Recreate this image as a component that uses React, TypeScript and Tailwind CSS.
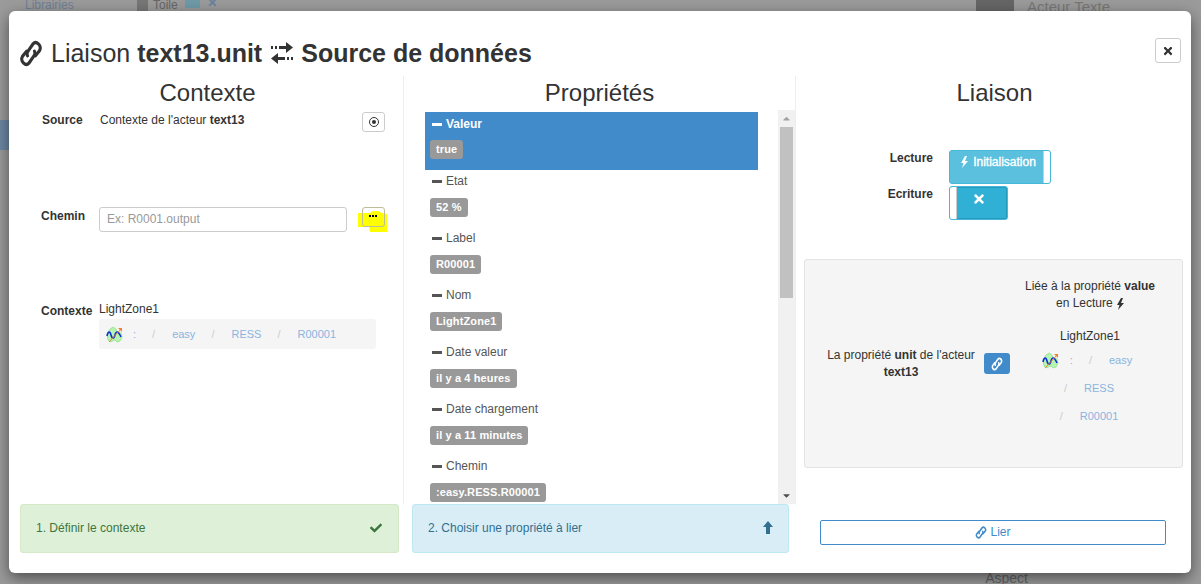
import { FaTimes, FaCheck, FaCaretUp, FaCaretDown } from "react-icons/fa";

const properties = [
  { name: "Valeur", value: "true", active: true },
  { name: "Etat", value: "52 %" },
  { name: "Label", value: "R00001" },
  { name: "Nom", value: "LightZone1" },
  { name: "Date valeur", value: "il y a 4 heures" },
  { name: "Date chargement", value: "il y a 11 minutes" },
  { name: "Chemin", value: ":easy.RESS.R00001" },
];

function ChainIcon({ width, height, strokeWidth = 3 }: { width: number; height: number; strokeWidth?: number }) {
  return (
    <svg width={width} height={height} viewBox="0 0 24 24" preserveAspectRatio="none" fill="none" stroke="currentColor" strokeWidth={strokeWidth} strokeLinecap="round" className="shrink-0">
      <path d="M8.5 14Q7.5 12 9 10L14 3.5Q16.5 1 19.5 3.5 22.5 6 20.5 9.5L16.5 14" />
      <path d="M15.5 10Q16.5 12 15 14L10 20.5Q7.5 23 4.5 20.5 1.5 18 3.5 14.5L7.5 10" />
    </svg>
  );
}

function TransferIcon() {
  return (
    <svg width="24" height="22" viewBox="0 0 24 22" fill="currentColor" className="shrink-0">
      <path d="M1 4h2v3H1zM5 4h2v3H5zM9 4h7V0l7 5.5-7 5.5V7H9z" />
      <path d="M1 16.5 8 11v4h7v3H8v4zM17 15h2v3h-2zM21 15h2v3h-2z" />
    </svg>
  );
}

function BoltIcon() {
  return (
    <svg width="8" height="12" viewBox="0 0 8 12" fill="currentColor" className="inline shrink-0">
      <path d="M5 0 1 7h2.5L2 12l6-7H5l2-5z" />
    </svg>
  );
}

function ArrowUpIcon() {
  return (
    <svg width="10" height="13" viewBox="0 0 10 13" fill="currentColor" className="shrink-0">
      <path d="M5 0l5 6H7v7H3V6H0z" />
    </svg>
  );
}

function ZoneLogo() {
  return (
    <svg width="17" height="17" viewBox="0 0 17 17" className="shrink-0">
      <path d="M1 8 4 3l3-2 3 2 1 3 4 1 1 4-2 4-3 1-2-2-5 2-2-2z" fill="#b5f5b0" stroke="#7fd67a" strokeWidth="0.6" />
      <path d="M1 10c1-5 3-5 4-1s3 4 4 0 3-4 5 0l1 2" fill="none" stroke="#1030d8" strokeWidth="1.6" />
      <path d="M3 16 15 3" stroke="#f08030" strokeWidth="1" />
      <path d="M12 2h4v4z" fill="#f08030" />
    </svg>
  );
}

function Crumb({ children }: { children: string }) {
  return (
    <>
      <span className="pr-[5px] pl-[6px] text-[#ccc]">/</span>
      <span className="pr-[10px] pl-[12px] text-[#8ab4df]">{children}</span>
    </>
  );
}

function PropertyItem({ name, value, active }: { name: string; value: string; active?: boolean }) {
  return (
    <div className={active ? "h-[58px] bg-[#428bca] pt-[4px] pl-[5px] text-white" : "h-[57px] pt-[3px] pl-[5px] text-[#555]"}>
      <div className={`flex h-[16px] items-center gap-[4px] pl-[2px] ${active ? "font-bold" : ""}`}>
        <span className={`h-[3px] w-[10px] ${active ? "bg-white" : "bg-[#555]"}`} />
        {name}
      </div>
      <div className={`inline-block h-[19px] rounded-[3px] bg-[#999] px-[6px] text-[11px] leading-[19px] font-bold tracking-[0.12px] text-white ${active ? "mt-[8px]" : "mt-[9px]"}`}>
        {value}
      </div>
    </div>
  );
}

export default function App() {
  return (
    <div className="relative h-[584px] w-[1201px] overflow-hidden bg-[#9b9b9b] font-['Liberation_Sans',Arial,sans-serif] text-[12px] text-[#333]">
      {/* page behind the dialog */}
      <div className="flex h-[11px] items-start overflow-hidden pl-[25px] text-[#6f7f96]">
        <span className="-mt-[4px] w-[112px] text-[12px]">Librairies</span>
        <span className="h-[11px] w-[11px] bg-[#777]" />
        <span className="-mt-[4px] ml-[5px] w-[32px] text-[12px] text-[#666]">Toile</span>
        <span className="h-[8px] w-[15px] bg-[#6f9aa8]" />
        <span className="-mt-[3px] ml-[7px] text-[#6a84a0]">
          <FaTimes size={11} />
        </span>
        <span className="ml-[758px] h-[11px] w-[38px] bg-[#666]" />
        <span className="-mt-[4px] ml-[13px] text-[15px] text-[#777]">Acteur Texte</span>
      </div>
      <div className="h-[109px] w-[9px]" />
      <div className="h-[30px] w-[9px] bg-[#6d88a4]" />
      <div className="flex justify-end pt-[415px] pr-[173px] text-[14px] text-[#666]">
        <span className="translate-y-[3px]">Aspect</span>
      </div>

      {/* dialog */}
      <div className="absolute top-[11px] left-[9px] flex h-[562px] w-[1182px] flex-col rounded-[6px] bg-white shadow-[0_5px_15px_rgba(0,0,0,0.5)]">
        <div className="flex h-[65px] items-start justify-between pt-[27px] pr-[10px] pl-[10px]">
          <div className="flex items-center gap-[8px] text-[25px] leading-[30px]">
            <ChainIcon width={24} height={27} />
            <span>
              Liaison <b>text13.unit</b>
            </span>
            <TransferIcon />
            <b className="-ml-[1px]">Source de données</b>
          </div>
          <div className="flex h-[25px] w-[26px] items-center justify-center rounded-[3px] border border-[#ccc]">
            <FaTimes size={12} />
          </div>
        </div>

        <div className="flex h-[428px]">
          {/* contexte */}
          <div className="w-[395px] border-r border-[#eee]">
            <h2 className="h-[36px] pl-[3px] text-center text-[24px] leading-[34px]">Contexte</h2>
            <div className="flex h-[95px] pr-[18px] pl-[33px]">
              <span className="-mt-[1px] w-[58px] font-bold">Source</span>
              <span className="-mt-[1px] grow">
                Contexte de l'acteur <b>text13</b>
              </span>
              <div className="flex h-[20px] w-[23px] items-center justify-center rounded-[3px] border border-[#ccc]">
                <span className="flex h-[10px] w-[10px] items-center justify-center rounded-full border-[1.5px] border-[#333]">
                  <span className="h-[4px] w-[4px] rounded-full bg-[#333]" />
                </span>
              </div>
            </div>
            <div className="flex h-[95px] pr-[18px] pl-[32px]">
              <span className="w-[58px] font-bold">Chemin</span>
              <div className="h-[25px] w-[248px] rounded-[3px] border border-[#ccc] px-[7px] leading-[23px] text-[#999]">
                Ex: R0001.output
              </div>
              <div className="relative ml-[15px] h-[20px] w-[23px]">
                {/* surligneur jaune par-dessus le bouton */}
                <svg width="29" height="22" viewBox="0 0 29 22" className="absolute top-[4px] -left-[4px]">
                  <path d="M0 2 12 2 15 0h5l4 2 5 1v18H12l-1-5H0z" fill="#ffff00" />
                </svg>
                <div className="absolute inset-0 rounded-[3px] border border-[#bdbd9a]" />
                <div className="absolute top-[8px] left-[7px] flex gap-[1px]">
                  <span className="h-[2px] w-[2px] bg-black" />
                  <span className="h-[2px] w-[2px] bg-black" />
                  <span className="h-[2px] w-[2px] bg-black" />
                </div>
              </div>
            </div>
            <div className="flex pr-[18px] pl-[32px]">
              <span className="w-[58px] font-bold">Contexte</span>
              <div>
                <div className="pb-[3px] leading-[14px]">LightZone1</div>
                <div className="flex h-[30px] w-[277px] items-center rounded-[3px] bg-[#f5f5f5] pl-[7px] text-[11px]">
                  <ZoneLogo />
                  <span className="ml-[10px] pr-[10px] text-[#8ab4df]">:</span>
                  <Crumb>easy</Crumb>
                  <Crumb>RESS</Crumb>
                  <Crumb>R00001</Crumb>
                </div>
              </div>
            </div>
          </div>

          {/* propriétés */}
          <div className="w-[392px] border-r border-[#eee]">
            <h2 className="h-[36px] text-center text-[24px] leading-[34px]">Propriétés</h2>
            <div className="flex h-[392px] pl-[21px]">
              <div className="h-[392px] w-[333px] overflow-hidden">
                {properties.map((p) => (
                  <PropertyItem key={p.name} {...p} />
                ))}
              </div>
              <div className="-mt-[2px] ml-[20px] flex h-[394px] w-[17px] flex-col items-center bg-[#f1f1f1]">
                <FaCaretUp size={11} className="mt-[3px] h-[11px] shrink-0 text-[#a3a3a3]" />
                <div className="mt-[3px] h-[171px] w-[13px] bg-[#c1c1c1]" />
                <div className="grow" />
                <FaCaretDown size={11} className="mb-[3px] text-[#505050]" />
              </div>
            </div>
          </div>

          {/* liaison */}
          <div className="grow">
            <h2 className="h-[36px] pl-[2px] text-center text-[24px] leading-[34px]">Liaison</h2>
            <div className="flex h-[147px] flex-col gap-[2px] pt-[38px]">
              <div className="flex">
                <span className="-mt-[1px] w-[137px] text-right font-bold">Lecture</span>
                <div className="ml-[16px] flex h-[34px] w-[102px] rounded-[3px] border border-[#46b8da] bg-[#5bc0de] text-white">
                  <div className="flex h-[22px] grow items-center justify-center gap-[5px] pl-[3px] [-webkit-text-stroke:0.35px_white]">
                    <BoltIcon />
                    Initialisation
                  </div>
                  <span className="h-full w-[7px] rounded-r-[2px] border-l border-[#ccc] bg-white" />
                </div>
              </div>
              <div className="flex">
                <span className="-mt-[1px] w-[137px] text-right font-bold">Ecriture</span>
                <div className="ml-[16px] flex h-[34px] w-[59px] rounded-[3px] border border-[#46b8da] bg-[#31b0d5] text-white shadow-[inset_0_0_0_1px_#269abc]">
                  <span className="h-full w-[7px] rounded-l-[2px] border-r border-[#ccc] bg-white" />
                  <div className="flex h-[24px] grow items-center justify-center pr-[7px]">
                    <FaTimes size={14} />
                  </div>
                </div>
              </div>
            </div>
            <div className="ml-[8px] flex h-[209px] w-[379px] items-center rounded-[3px] border border-[#e3e3e3] bg-[#f5f5f5] pl-[20px]">
              <div className="w-[152px] text-center leading-[17px]">
                La propriété <b>unit</b> de l'acteur <b>text13</b>
              </div>
              <div className="ml-[7px] flex h-[21px] w-[26px] items-center justify-center rounded-[3px] bg-[#428bca] text-white">
                <ChainIcon width={12} height={14} />
              </div>
              <div className="ml-[3px] flex h-full w-[154px] flex-col items-center pt-[18px] text-center">
                <div className="leading-[17px]">
                  Liée à la propriété <b>value</b>
                  <br />
                  en Lecture <BoltIcon />
                </div>
                <div className="mt-[16px] leading-[17px]">LightZone1</div>
                <div className="mt-[1px] flex h-[28px] items-center pl-[4px] text-[11px]">
                  <ZoneLogo />
                  <span className="ml-[11px] pr-[10px] text-[#8ab4df]">:</span>
                  <Crumb>easy</Crumb>
                </div>
                <div className="flex h-[28px] items-center pl-[2px] text-[11px]">
                  <Crumb>RESS</Crumb>
                </div>
                <div className="flex h-[28px] items-center pl-[2px] text-[11px]">
                  <Crumb>R00001</Crumb>
                </div>
              </div>
            </div>
          </div>
        </div>

        {/* étapes */}
        <div className="flex pl-[11px]">
          <div className="flex h-[49px] w-[379px] items-center justify-between rounded-[3px] border border-[#d6e9c6] bg-[#dff0d8] pr-[16px] pb-[2px] pl-[15px] text-[#3c763d]">
            1. Définir le contexte
            <FaCheck size={12} />
          </div>
          <div className="ml-[13px] flex h-[49px] w-[377px] items-center justify-between rounded-[3px] border border-[#bce8f1] bg-[#d9edf7] pr-[15px] pb-[2px] pl-[15px] text-[#31708f]">
            2. Choisir une propriété à lier
            <ArrowUpIcon />
          </div>
          <div className="ml-[31px] flex h-[25px] w-[346px] translate-y-[16px] items-center justify-center gap-[3px] rounded-[2px] border border-[#428bca] pb-[1px] text-[#428bca]">
            <ChainIcon width={12} height={13} />
            Lier
          </div>
        </div>
      </div>
    </div>
  );
}
